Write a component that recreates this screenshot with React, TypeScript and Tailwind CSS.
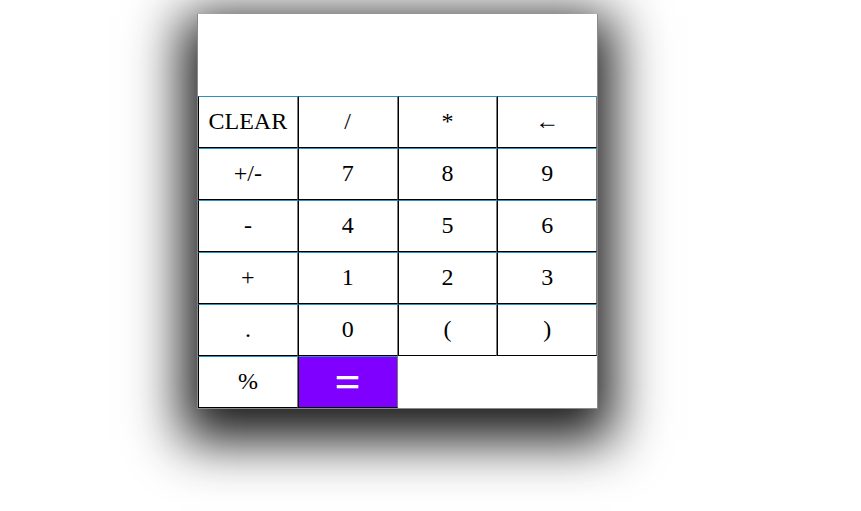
import React from "react";

const keys: string[] = [
  "CLEAR", "/", "*", "←",
  "+/-", "7", "8", "9",
  "-", "4", "5", "6",
  "+", "1", "2", "3",
  ".", "0", "(", ")",
  "%",
];

export default function App() {
  return (
    <div className="min-h-[511px] w-full bg-white pt-[14px]">
      <div
        className="ml-[197px] w-[401px] border border-t-0 border-[#8a8a8a] bg-white shadow-[0_17px_50px_15px_rgba(0,0,0,0.9)]"
        style={{ fontFamily: '"Liberation Serif", "Times New Roman", serif' }}
      >
        <div className="h-[82px] bg-white" />
        <div className="grid grid-cols-4">
          {keys.map((k) => (
            <button
              key={k}
              className="flex h-[52px] items-center justify-center border border-b-black border-l-black border-r-[#7a7a7a] border-t-[#2f8fbf] bg-white pb-[2px] text-[24px] leading-none text-black"
            >
              {k}
            </button>
          ))}
          <button className="flex h-[52px] items-center justify-center border border-b-black border-l-black border-r-[#7a7a7a] border-t-[#2f8fbf] bg-[#7f00ff] text-[46px] font-bold leading-none text-white">
            =
          </button>
        </div>
      </div>
    </div>
  );
}
